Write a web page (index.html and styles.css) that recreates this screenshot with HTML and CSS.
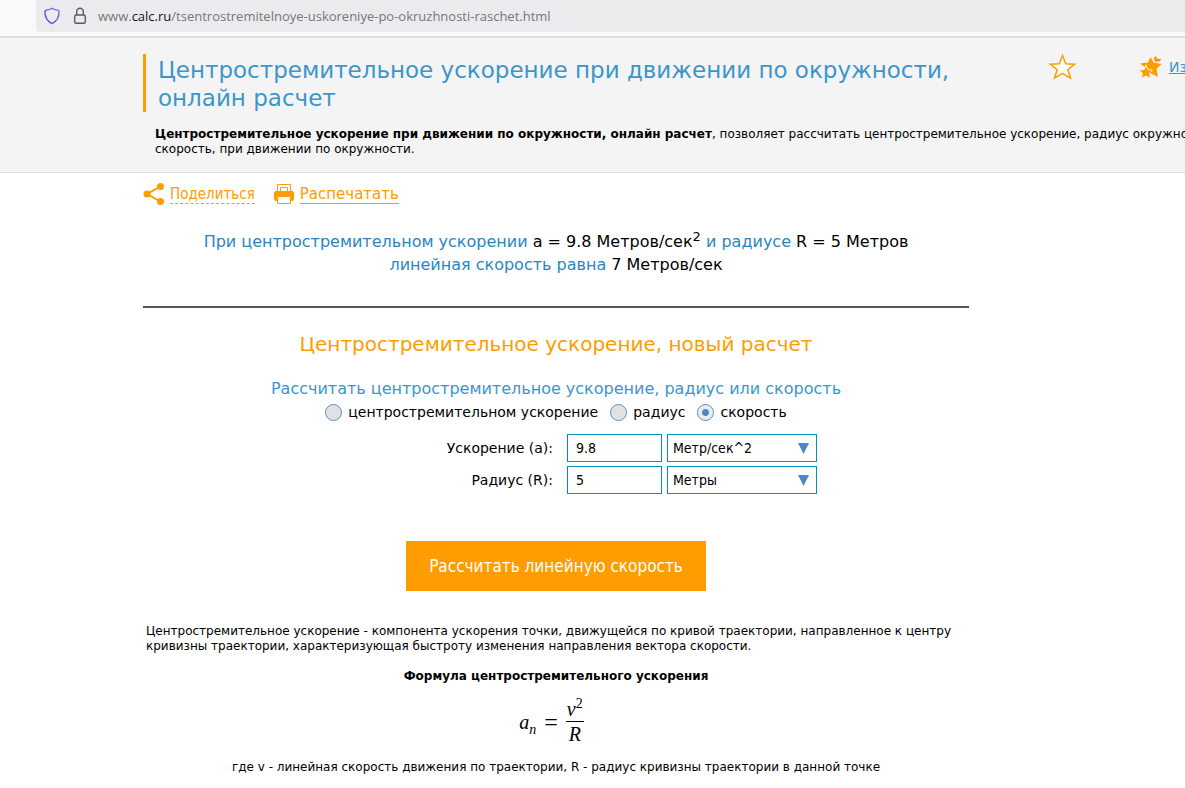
FILE: index.html
```
<!DOCTYPE html>
<html lang="ru">
<head>
  <meta charset="utf-8">
  <title>Центростремительное ускорение при движении по окружности, онлайн расчет</title>
  <link rel="stylesheet" href="styles.css">
</head>
<body>
<div class="browser">
  <div class="address">
    <svg class="shield" width="16" height="18" viewBox="0 0 16 18">
      <defs>
        <linearGradient id="shieldColor" x1="0" y1="1" x2="1" y2="0">
          <stop offset="0" stop-color="#2b52c8"/>
          <stop offset="1" stop-color="#9a62f5"/>
        </linearGradient>
      </defs>
      <path d="M8 1.2 C6 2.6 4 3 1.6 3.4 C1 3.6 .9 4 .9 4.6 C1 10.500 3 14.500 8 16.600 C13 14.500 15 10.500 15.100 4.600 C15.100 4 15 3.600 14.400 3.400 C12 3 10 2.600 8 1.200 Z" fill="none" stroke="url(#shieldColor)" stroke-width="1.4" stroke-linejoin="round"/>
    </svg>
    <svg class="lock" width="14" height="18" viewBox="0 0 14 18">
      <rect x="1.700" y="8" width="10.600" height="8.300" rx="1.500" fill="none" stroke="#5b5b66" stroke-width="1.400"/>
      <path d="M3.700 8 V4.800 A3.300 3.600 0 0 1 10.300 4.800 V8" fill="none" stroke="#5b5b66" stroke-width="1.400"/>
    </svg>
    <span class="url">www.<b>calc.ru</b>/tsentrostremitelnoye-uskoreniye-po-okruzhnosti-raschet.html</span>
  </div>
</div>

<header class="header">
  <div class="header-top">
    <h1>Центростремительное ускорение при движении по окружности, онлайн расчет</h1>
    <button class="star" type="button" aria-label="Добавить в избранное">
      <svg width="28" height="26" viewBox="0 0 28 26">
        <path d="M14.500 1.500 L17.700 9.800 L26.500 10.200 L19.800 15.700 L22.500 24.200 L14.500 19.400 L6.500 24.200 L9.200 15.700 L2.300 10.200 L11.300 9.800 Z" fill="#fff" stroke="#ff9c00" stroke-width="1.500"/>
      </svg>
    </button>
    <a class="favorites" href="#">
      <svg width="24" height="24" viewBox="0 0 24 24">
        <path d="M11.500 2 L14.500 7.500 L22.500 9 L17.500 14 L19 22 L12 18.500 L6 20 L7 13 L1 8.500 L9 7.500 Z" fill="#ff9c00"/>
        <path d="M16.500 0 L18.500 3.200 L23.500 3.500 L20.500 7 L16.500 7.500 L14 4 Z" fill="#ff9c00" stroke="#f4f4f4"/>
        <path d="M7 10 L8.800 14.500 L13.500 15 L10.500 18 L11.500 23.500 L7 21 L2 23.500 L3.500 18.500 L0 15 L5.200 14.500 Z" fill="#ff9c00" stroke="#f4f4f4"/>
      </svg>
      <span>Избранное</span>
    </a>
  </div>
  <p class="intro"><b>Центростремительное ускорение при движении по окружности, онлайн расчет</b>, позволяет рассчитать центростремительное ускорение, радиус окружности и линейную<br>скорость, при движении по окружности.</p>
</header>

<main class="content">
  <div class="tools">
    <a class="share" href="#">
      <svg width="22" height="22" viewBox="0 0 22 22">
        <path d="M17.500 3.500 L4 11 L17.500 18.500" fill="none" stroke="#ff9c00" stroke-width="2"/>
        <circle cx="17.500" cy="3.500" r="3.500" fill="#ff9c00"/>
        <circle cx="4" cy="11" r="3.500" fill="#ff9c00"/>
        <circle cx="17.500" cy="18.500" r="3.500" fill="#ff9c00"/>
      </svg>
      <span>Поделиться</span>
    </a>
    <a class="print" href="#">
      <svg width="20" height="22" viewBox="0 0 20 22">
        <path d="M3.500 8 V1.500 H16.500 V8 M6.500 8 V4.500 H13.500 V8" fill="none" stroke="#ff9c00"/>
        <path d="M2 8 H18 Q20 8 20 10 V16 Q20 18 18 18 H2 Q0 18 0 16 V10 Q0 8 2 8 Z" fill="#ff9c00"/>
        <path d="M3.500 13.500 H16.500 V20.500 H3.500 Z" fill="#fff" stroke="#ff9c00"/>
      </svg>
      <span>Распечатать</span>
    </a>
  </div>

  <p class="result"><span>При центростремительном ускорении</span> a = 9.8 Метров/сек<sup>2</sup> <span>и радиусе</span> R = 5 Метров<br><span>линейная скорость равна</span> 7 Метров/сек</p>
  <hr>

  <form class="calc">
    <h2>Центростремительное ускорение, новый расчет</h2>
    <h3>Рассчитать центростремительное ускорение, радиус или скорость</h3>
    <div class="radios">
      <label><input type="radio" name="what" value="a">центростремительном ускорение</label>
      <label><input type="radio" name="what" value="r">радиус</label>
      <label><input type="radio" name="what" value="v" checked>скорость</label>
    </div>
    <div class="row">
      <label for="accel">Ускорение (a):</label>
      <input id="accel" type="text" value="9.8">
      <select aria-label="Единицы ускорения"><option>Метр/сек^2</option></select>
    </div>
    <div class="row">
      <label for="radius">Радиус (R):</label>
      <input id="radius" type="text" value="5">
      <select aria-label="Единицы радиуса"><option>Метры</option></select>
    </div>
    <button class="submit" type="button">Рассчитать линейную скорость</button>
  </form>

  <p class="about">Центростремительное ускорение - компонента ускорения точки, движущейся по кривой траектории, направленное к центру кривизны траектории, характеризующая быстроту изменения направления вектора скорости.</p>
  <h4>Формула центростремительного ускорения</h4>
  <div class="formula">
    <span><i>a</i><sub>n</sub></span>
    <span class="equals">=</span>
    <span class="fraction"><span class="top"><i>v</i><sup>2</sup></span><span class="bottom"><i>R</i></span></span>
  </div>
  <p class="legend">где v - линейная скорость движения по траектории, R - радиус кривизны траектории в данной точке</p>
</main>
</body>
</html>
```
FILE: styles.css
```
* {
  box-sizing: border-box;
}
body {
  margin: 0;
  overflow: hidden;
  background: #fff;
  color: #000;
  font-family: Verdana, "DejaVu Sans", sans-serif;
  font-size: 12px;
  line-height: 15px;
}
h1, h2, h3, h4, p {
  margin: 0;
  font-weight: normal;
}

/* browser bar */
.browser {
  padding: 0 0 4px 36px;
  background: #f9f9fb;
  border-bottom: 2px solid #dedee0;
}
.address {
  display: flex;
  align-items: center;
  height: 32px;
  padding-left: 8px;
  background: #ebebed;
  border-radius: 0 0 0 4px;
}
.lock {
  margin: 0 11px 0 13px;
}
.url {
  color: #76767d;
  font-family: "Segoe UI", "Open Sans", sans-serif;
  font-size: 13px;
  line-height: 18px;
}
.url b {
  color: #15141a;
  font-weight: normal;
}

/* page header */
.header {
  padding: 16px 0 15px 143px;
  background: #f4f4f4;
  border-bottom: 1px solid #dfdfdf;
  overflow: hidden;
}
.header-top {
  display: flex;
  align-items: flex-start;
}
h1 {
  flex: 0 0 826px;
  padding: 2px 0 0 12px;
  border-left: 3px solid #ff9c00;
  color: #3c96cb;
  font-size: 23px;
  line-height: 28px;
}
.star {
  margin-left: 79px;
  padding: 0;
  border: none;
  background: none;
}
.favorites {
  display: flex;
  align-items: center;
  gap: 6px;
  margin: 1px 0 0 63px;
  color: #3c96cb;
  font-size: 14px;
}
.intro {
  margin-top: 15px;
  padding-left: 12px;
  white-space: nowrap;
}

.content {
  max-width: 969px;
  padding-left: 143px;
}
.tools {
  display: flex;
  gap: 19px;
  padding-top: 10px;
}
.tools a {
  display: flex;
  align-items: center;
  gap: 5px;
  color: #ff9c00;
  font-size: 15px;
  line-height: 18px;
  text-decoration: none;
}
.tools .print {
  gap: 6px;
}
.tools span {
  border-bottom: 1px solid #ff9c00;
}
.tools .share span {
  border-bottom: 1px dashed #ff9c00;
  font-family: Tahoma, "DejaVu Sans Condensed", "DejaVu Sans", sans-serif;
}

.result {
  padding: 25px 0 30px;
  font-size: 16px;
  line-height: 23px;
  text-align: center;
}
.result span {
  color: #2a86c0;
}
.result sup {
  font-size: 13px;
  line-height: 0;
}
hr {
  margin: 0;
  border: none;
  border-top: 2px solid #555;
}

/* calculator */
.calc {
  text-align: center;
}
h2 {
  padding-top: 23px;
  color: #ff9c00;
  font-size: 20px;
  line-height: 26px;
}
h3 {
  padding-top: 22px;
  color: #3c96cb;
  font-size: 16px;
  line-height: 20px;
}
.radios {
  display: flex;
  justify-content: center;
  gap: 12px;
  margin: 3px 0 12px;
  font-size: 14px;
  line-height: 20px;
}
.radios label {
  display: flex;
  align-items: center;
}
.radios input {
  appearance: none;
  width: 17px;
  height: 17px;
  margin: 0 6px 0 0;
  border: 1px solid #5a8fc8;
  border-radius: 50%;
  background: #e1e1e1;
}
.radios input:checked {
  background: radial-gradient(circle, #4f86c6 3px, #ececec 4px);
}
.row {
  display: flex;
  align-items: center;
  gap: 5px;
  margin-bottom: 4px;
  font-size: 14px;
}
.row label {
  width: 50%;
  padding-right: 3px;
  text-align: right;
}
.row input, .row select {
  height: 28px;
  border: 1px solid #0091c2;
  border-radius: 0;
  background: #fff;
  color: #000;
  font-family: Tahoma, "DejaVu Sans Condensed", "DejaVu Sans", sans-serif;
  font-size: 14px;
}
.row input {
  width: 95px;
  margin-left: 6px;
  padding: 0 8px;
}
.row select {
  appearance: none;
  width: 150px;
  padding: 0 5px;
  background: #fff url("data:image/svg+xml,%3Csvg xmlns='http://www.w3.org/2000/svg' width='11' height='11'%3E%3Cpath d='M0 0H11L5.500 11Z' fill='%234f86c6'/%3E%3C/svg%3E") no-repeat right 7px center;
}
.submit {
  width: 300px;
  height: 50px;
  margin: 43px 0 33px;
  border: none;
  background: #ff9c00;
  color: #fff;
  font-family: Tahoma, "DejaVu Sans Condensed", "DejaVu Sans", sans-serif;
  font-size: 17px;
}

.about {
  padding: 0 3px;
}
h4 {
  padding: 15px 0 13px;
  font-size: 12px;
  font-weight: bold;
  text-align: center;
}
.formula {
  display: flex;
  align-items: center;
  justify-content: center;
  gap: 8px;
  padding-right: 9px;
  font-family: "Liberation Serif", serif;
  font-size: 20px;
  line-height: 24px;
}
.formula sub, .formula sup {
  font-size: 14px;
  line-height: 0;
}
.formula sub {
  font-style: italic;
}
.formula .equals {
  font-size: 24px;
}
.fraction {
  display: flex;
  flex-direction: column;
  text-align: center;
}
.fraction .top {
  padding: 0 1px;
  border-bottom: 1px solid #000;
}
.legend {
  padding-top: 14px;
  text-align: center;
}
```
